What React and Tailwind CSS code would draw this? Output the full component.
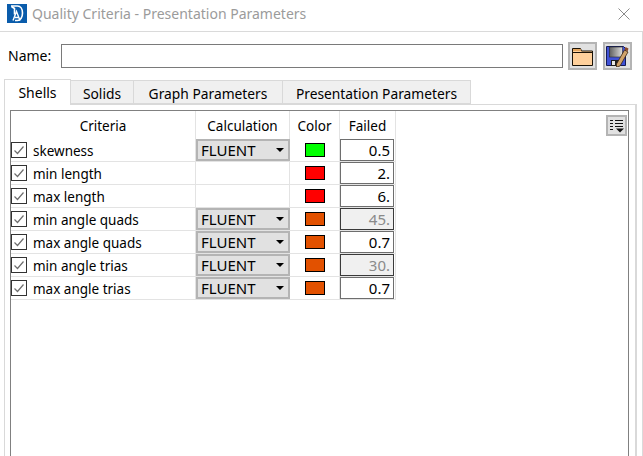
import React from "react";

const rows = [
  { name: "skewness", calc: true, color: "bg-[#00ff00]", value: "0.5" },
  { name: "min length", calc: false, color: "bg-[#ff0000]", value: "2." },
  { name: "max length", calc: false, color: "bg-[#ff0000]", value: "6." },
  { name: "min angle quads", calc: true, color: "bg-[#e25100]", value: "45.", disabled: true },
  { name: "max angle quads", calc: true, color: "bg-[#e25100]", value: "0.7" },
  { name: "min angle trias", calc: true, color: "bg-[#e25100]", value: "30.", disabled: true },
  { name: "max angle trias", calc: true, color: "bg-[#e25100]", value: "0.7" },
];

const tabs = [
  { label: "Solids", width: "w-[63px]" },
  { label: "Graph Parameters", width: "w-[149px]" },
  { label: "Presentation Parameters", width: "w-[188px]" },
];

const Logo = () => (
  <svg width="20" height="19" viewBox="0 0 20 19">
    <rect width="20" height="19" fill="#0a5cab" />
    <path d="M4 2h6.500c3 0 5 3 5 7s-2 7.500-5 7.500H8" fill="none" stroke="#fff" strokeWidth="1.600" />
    <path d="M4.500 2.500l3 2v6" fill="none" stroke="#fff" strokeWidth="1.600" />
    <path d="M6 16.500l3.500-9 3.500 9M8 13.500h4" fill="none" stroke="#fff" strokeWidth="1.400" />
  </svg>
);

const FolderIcon = () => (
  <svg width="21" height="19" viewBox="0 0 21 19">
    <path d="M.5 18.500V1.500h8l1 2.500h11v14.500z" fill="#ffd09b" stroke="#1a1206" />
    <path d="M1 2h7.500l.8 2H1z" fill="#e2a45f" />
    <path d="M.5 5.500h20" stroke="#1a1206" />
  </svg>
);

const SaveIcon = () => (
  <svg width="23" height="21" viewBox="0 0 23 21">
    <defs>
      <linearGradient id="label" x1="0" y1="0" x2="1" y2="0">
        <stop offset="0" stopColor="#5f5f5f" />
        <stop offset="1" stopColor="#dedede" />
      </linearGradient>
    </defs>
    <path d="M.5.500h17l2 2v17h-19z" fill="#3f51d6" stroke="#141a55" />
    <rect x="3.500" y="1" width="13" height="10" fill="url(#label)" stroke="#2a2a2a" strokeWidth="0.600" />
    <rect x="5" y="14" width="9" height="6" fill="#1f1f1f" />
    <rect x="6" y="15" width="3" height="4" fill="#e8e8e8" />
    <path d="M10.500 18l8-14 3.500 2-8 14-3.500 1z" fill="#d0a26a" stroke="#3a2410" strokeWidth="0.800" />
    <path d="M18.500 3.500l1-2.500 3 1.500-1 3z" fill="#8a4a2a" />
  </svg>
);

const MenuIcon = () => (
  <svg width="15" height="14" viewBox="0 0 15 14">
    <path d="M1 1.500h3M1 4.500h3M1 7.500h3M1 10.500h3M6 1.500h8M6 4.500h8M6 7.500h8" stroke="#111" fill="none" />
    <path d="M7 9.500h8l-4 4z" fill="#111" />
  </svg>
);

const Check = () => (
  <span className="flex h-4 w-4 shrink-0 items-center justify-center border border-[#333333] bg-white">
    <svg width="14" height="14" viewBox="0 0 14 14">
      <path d="M2.500 7.500l3 3 6-7" fill="none" stroke="#6e6e6e" strokeWidth="1.200" />
    </svg>
  </span>
);

const Row = ({ row }) => (
  <div className="grid h-[23px] w-[385px] grid-cols-[185px_94px_50px_56px] grid-rows-[22px] border-b border-[#e3e3e3]">
    <div className="flex items-center gap-[6px] border-r border-[#e3e3e3]">
      <Check />
      <span className="mt-[1px] text-[13.5px]">{row.name}</span>
    </div>
    {row.calc ? (
      <div className="flex items-center justify-between border-2 border-[#b4b4b4] bg-[#e1e1e1] pl-[3px] pr-[4px] text-[15px]">
        <span className="-mt-[1px] leading-[18px]">FLUENT</span>
        <span className="h-0 w-0 border-x-[4px] border-t-[4px] border-x-transparent border-t-black" />
      </div>
    ) : (
      <div className="border-r border-[#e3e3e3]" />
    )}
    <div className="flex items-center justify-center border-r border-[#e3e3e3]">
      <span className={`h-[14px] w-[20px] border border-black ${row.color}`} />
    </div>
    <div className="border-r border-[#e3e3e3] pr-px">
      <div
        className={
          row.disabled
            ? "h-[22px] border border-[#3a3a3a] bg-[#f0f0f0] pr-[3px] text-right text-[15px] text-[#8a8a8a]"
            : "h-[22px] border border-[#6e6e6e] bg-white pr-[3px] text-right text-[15px]"
        }
      >
        {row.value}
      </div>
    </div>
  </div>
);

export default function App() {
  return (
    <div className="flex h-[456px] w-[643px] flex-col overflow-hidden bg-white font-['Noto_Sans',sans-serif] text-[14px] leading-[20px] text-black">
      <div className="flex h-[31px] shrink-0 items-center pb-[4px] pl-[7px] pr-[13px]">
        <Logo />
        <span className="ml-[5px] flex-1 text-[14px] text-[#9b9b9b]">
          Quality Criteria - Presentation Parameters
        </span>
        <svg width="12" height="12" viewBox="0 0 12 12">
          <path d="M.5.500l11 11M11.500.500l-11 11" stroke="#8a8a8a" fill="none" />
        </svg>
      </div>

      <div className="flex min-h-0 flex-1 flex-col border-r border-t border-[#dadada]">
        <div className="flex items-center pl-[8px] pt-[10px]">
          <span className="w-[53px]">Name:</span>
          <div className="h-[24px] w-[502px] border border-[#7a7a7a] bg-white" />
          <button className="ml-[5px] flex h-[28px] w-[29px] items-center justify-center border-2 border-[#b4b4b4] bg-[#e1e1e1]">
            <FolderIcon />
          </button>
          <button className="ml-[6px] flex h-[28px] w-[29px] items-center justify-center border-2 border-[#b4b4b4] bg-[#e1e1e1]">
            <SaveIcon />
          </button>
        </div>

        <div className="relative z-10 ml-[4px] mt-[9px] flex items-end">
          <div className="-mb-px h-[26px] w-[67px] border border-b-0 border-[#d9d9d9] bg-white pt-[3px] text-center">
            Shells
          </div>
          {tabs.map((tab) => (
            <div
              key={tab.label}
              className={`h-[24px] border-y border-r border-[#d9d9d9] bg-[#f0f0f0] pt-[3px] text-center ${tab.width}`}
            >
              <span className="text-[13.8px]">{tab.label}</span>
            </div>
          ))}
        </div>

        <div className="ml-[4px] mr-[5px] flex min-h-0 flex-1 flex-col border-x border-t border-r-[2px] border-[#d9d9d9] pl-[5px] pr-[6px] pt-[5px]">
          <div className="relative min-h-0 flex-1 border-x border-t border-[#808080] bg-white">
            <div className="flex h-[28px] w-[385px] text-[13.5px]">
              <div className="w-[185px] border-r border-[#e3e3e3] pt-[5px] text-center">Criteria</div>
              <div className="w-[94px] border-r border-[#e3e3e3] pt-[5px] text-center">Calculation</div>
              <div className="w-[50px] border-r border-[#e3e3e3] pt-[5px] text-center">Color</div>
              <div className="w-[56px] border-r border-[#e3e3e3] pt-[5px] text-center">Failed</div>
            </div>
            {rows.map((row) => (
              <Row key={row.name} row={row} />
            ))}
            <button className="absolute right-[1px] top-[4px] flex h-[21px] w-[21px] items-center justify-center border-2 border-[#b4b4b4] bg-[#e1e1e1]">
              <MenuIcon />
            </button>
          </div>
        </div>
      </div>
    </div>
  );
}
